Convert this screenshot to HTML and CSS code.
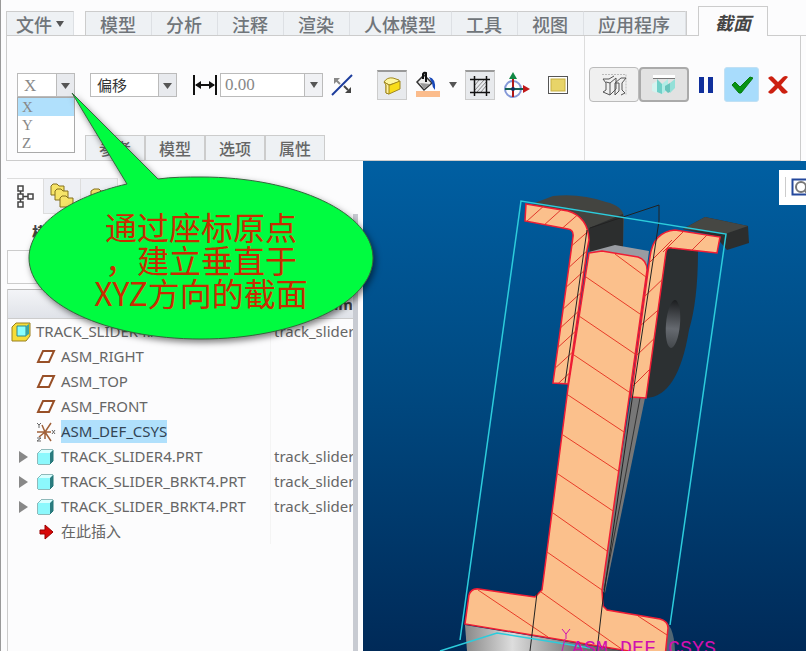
FILE: index.html
```html
<!DOCTYPE html>
<html lang="zh-CN">
<head>
    <meta charset="UTF-8">
    <meta name="viewport" content="width=device-width, initial-scale=1.0">
    <link rel="stylesheet" href="styles.css">
    <title>截面</title>
</head>
<body>
    <header class="ribbon">
        <nav class="tabs">
            <button class="tab tab-file">文件<span class="caret"></span></button>
            <div class="tab-group">
                <button class="tab">模型</button>
                <button class="tab">分析</button>
                <button class="tab">注释</button>
                <button class="tab">渲染</button>
                <button class="tab">人体模型</button>
                <button class="tab">工具</button>
                <button class="tab">视图</button>
                <button class="tab">应用程序</button>
            </div>
            <button class="tab tab-active">截面</button>
        </nav>
        <section class="ribbon-body">
            <div class="settings">
                <div class="toolbar">
                    <div class="group group-wide">
                        <div class="axis">
                            <select class="select select-axis" aria-label="方向">
                                <option>X</option>
                                <option>Y</option>
                                <option>Z</option>
                            </select>
                            <ul class="axis-list">
                                <li class="selected">X</li>
                                <li>Y</li>
                                <li>Z</li>
                            </ul>
                        </div>
                        <select class="select select-mode" aria-label="类型">
                            <option>偏移</option>
                        </select>
                    </div>
                    <div class="group group-offset">
                        <svg width="24" height="22" viewBox="0 0 24 22">
                            <path d="M1 1v20M23 1v20M3 11h18" stroke="#111" stroke-width="2" fill="none"/>
                            <path d="M2 11l6-4v8zM22 11l-6-4v8z" fill="#111"/>
                        </svg>
                        <div class="combo">
                            <input type="text" value="0.00" aria-label="距离">
                            <button aria-label="最近的值"><span class="caret"></span></button>
                        </div>
                    </div>
                    <button class="tool" aria-label="反向">
                        <svg width="22" height="24" viewBox="0 0 22 24">
                            <path d="M1 22L21 2" stroke="#1c3c9c" stroke-width="2"/>
                            <path d="M9 11L5 7" stroke="#888" stroke-width="2"/>
                            <path d="M3 5h6l-6 6z" fill="#888"/>
                            <path d="M13 13l4 4" stroke="#444" stroke-width="2"/>
                            <path d="M20 14v6h-6z" fill="#444"/>
                        </svg>
                    </button>
                    <div class="group group-view">
                        <button class="tool tool-on" aria-label="封闭">
                            <svg width="20" height="20" viewBox="0 0 20 20">
                                <path d="M2 6q3-5 9-4l6 2v2l-10 3z" fill="#fdf6a0" stroke="#a08820"/>
                                <path d="M4 8l4 1 10-4v8L7 18l-3-1z" fill="#f8dc18" stroke="#a08820"/>
                                <path d="M2 6l5 3v9l-3-1V9z" fill="#fff0a0" stroke="#a08820"/>
                            </svg>
                        </button>
                        <button class="tool" aria-label="颜色">
                            <svg width="26" height="28" viewBox="0 0 26 28">
                                <rect x="1" y="20" width="24" height="6" fill="#fbbc8c"/>
                                <path d="M2 11l7-7 8 8-8 7z" fill="#eee" stroke="#333" stroke-width="1.5"/>
                                <path d="M5 12l10 1-6 5z" fill="#999"/>
                                <path d="M8 8V3q1-2 3-1v9" fill="none" stroke="#111" stroke-width="2"/>
                                <path d="M14 6q7 1 6 13q-3-3-3-7z" fill="#1848b8"/>
                            </svg>
                        </button>
                        <button class="tool" aria-label="更多颜色"><span class="caret"></span></button>
                        <button class="tool tool-on" aria-label="剖面线">
                            <svg width="22" height="22" viewBox="0 0 22 22">
                                <path d="M6 10l4-5M6 15l9-10M8 17l9-10M12 17l5-6" stroke="#888"/>
                                <path d="M5.500 1v20M17.500 1v20M1 4.500h20M1 17.500h20" stroke="#111" stroke-width="1.500"/>
                            </svg>
                        </button>
                        <button class="tool" aria-label="拖动器">
                            <svg width="28" height="28" viewBox="0 0 28 28">
                                <circle cx="10" cy="18" r="8" fill="none" stroke="#8498d8" stroke-width="2"/>
                                <path d="M10 6v20" stroke="#b01818" stroke-width="2"/>
                                <path d="M2 18h20" stroke="#126050" stroke-width="2"/>
                                <path d="M10 1l4 7H6z" fill="#118844"/>
                                <path d="M27 18l-7-4v8z" fill="#c01818"/>
                                <circle cx="10" cy="18" r="2" fill="#113366"/>
                            </svg>
                        </button>
                    </div>
                    <button class="tool" aria-label="2D 视图">
                        <svg width="22" height="20" viewBox="0 0 22 20">
                            <rect x="1.500" y="1.500" width="19" height="17" fill="#fff" stroke="#555"/>
                            <rect x="4" y="4" width="14" height="12" fill="#e8d468" stroke="#c8b040"/>
                        </svg>
                    </button>
                </div>
                <nav class="panels">
                    <button>参考</button>
                    <button>模型</button>
                    <button>选项</button>
                    <button>属性</button>
                </nav>
            </div>
            <div class="actions">
                <button class="preview" aria-label="无预览">
                    <svg width="26" height="26" viewBox="0 0 26 26" fill="none" stroke="#555">
                        <path d="M1 2.500h24v21" stroke="#bbb" stroke-dasharray="2 1"/>
                        <path d="M2 7h6L13 4M2 7l3 4v7l-3 2 7 3V11L5 10M9 11l6-5v11l-6 6M14 23V11l6-5h5l-4 5v7l3 3-4 2M14 11h4v8l-4 4"/>
                    </svg>
                </button>
                <button class="preview preview-on" aria-label="预览">
                    <svg width="26" height="26" viewBox="0 0 26 26">
                        <path d="M2 3h22v4H2z" fill="#fff"/>
                        <path d="M2 6.500h22" stroke="#777"/>
                        <path d="M1 12l5-3v12l-5-2z" fill="#d4f4f0"/>
                        <path d="M6 7l5 5v10l-5-2z" fill="#70d0c8"/>
                        <path d="M11 12l6-5v10l-6 5z" fill="#b0ece6"/>
                        <path d="M14 14l5-3v9l-2 1-3-3z" fill="#68c4bc"/>
                        <path d="M19 11l5-4v9l-5 5z" fill="#94e0d8"/>
                    </svg>
                </button>
                <button class="tool tool-pause" aria-label="暂停">
                    <svg width="16" height="18" viewBox="0 0 16 18"><path d="M1 1h5v16H1zM10 1h5v16h-5z" fill="#10309c"/></svg>
                </button>
                <button class="tool tool-ok" aria-label="确定">
                    <svg width="22" height="18" viewBox="0 0 22 18"><path d="M1 9l3-3 5 5L19 1l3 1L10 17H8z" fill="#069414" stroke="#077a10"/></svg>
                </button>
                <button class="tool" aria-label="取消">
                    <svg width="22" height="20" viewBox="0 0 22 20"><path d="M1 3q3-3 5-1l5 5 5-5q3-2 5 0l-7 8 7 7q-3 3-6 1l-4-5-5 5q-3 2-5-1l7-7z" fill="#cc2010"/></svg>
                </button>
            </div>
        </section>
    </header>

    <main class="workspace">
        <aside class="navigator">
            <nav class="nav-tabs">
                <button class="nav-tab nav-tab-on" aria-label="模型树">
                    <svg width="18" height="26" viewBox="0 0 18 26" fill="none" stroke="#444" stroke-width="1.500">
                        <path d="M2 2h5v5H2zM2 10h5v5H2zM2 18h5v5H2zM12 10h5v5h-5zM4.500 7v3M4.500 15v3M7 12.500h5"/>
                    </svg>
                </button>
                <button class="nav-tab" aria-label="文件夹浏览器">
                    <svg width="24" height="26" viewBox="0 0 24 26" fill="#f6e468" stroke="#85701c">
                        <path d="M1 12V3l2-2h4l2 2h5v9z"/>
                        <path d="M5 17V8l2-2h4l2 2h5v9z"/>
                        <path d="M10 24v-9l2-2h4l2 2h5v9z"/>
                    </svg>
                </button>
                <button class="nav-tab" aria-label="收藏夹">
                    <svg width="24" height="26" viewBox="0 0 24 26" fill="#f6e468" stroke="#85701c">
                        <path d="M4 16V8l3-2h5l2 2h6v8z"/>
                    </svg>
                </button>
            </nav>
            <h2 class="nav-title">模型树</h2>
            <div class="nav-filter"></div>
            <div class="tree-box">
                <table class="tree">
                    <thead>
                        <tr><th></th><th class="col-name">Comm</th></tr>
                    </thead>
                    <tbody>
                        <tr>
                            <td><div class="node node-root"><svg width="20" height="20" viewBox="0 0 20 20"><path d="M1 5l4-4h14v13l-4 5H1z" fill="#f6dc38" stroke="#998020"/><path d="M6 4h9v10H6z" fill="#8ff" stroke="#388"/><path d="M15 4l3-2v10l-3 2z" fill="#39a5a5"/></svg><span>TRACK_SLIDER4.ASM</span></div></td>
                            <td>track_slider</td>
                        </tr>
                        <tr>
                            <td><div class="node"><svg width="20" height="16" viewBox="0 0 20 16"><path d="M7 2h11l-5 11H2z" fill="#fff" stroke="#985028" stroke-width="2"/></svg><span>ASM_RIGHT</span></div></td>
                            <td></td>
                        </tr>
                        <tr>
                            <td><div class="node"><svg width="20" height="16" viewBox="0 0 20 16"><path d="M7 2h11l-5 11H2z" fill="#fff" stroke="#985028" stroke-width="2"/></svg><span>ASM_TOP</span></div></td>
                            <td></td>
                        </tr>
                        <tr>
                            <td><div class="node"><svg width="20" height="16" viewBox="0 0 20 16"><path d="M7 2h11l-5 11H2z" fill="#fff" stroke="#985028" stroke-width="2"/></svg><span>ASM_FRONT</span></div></td>
                            <td></td>
                        </tr>
                        <tr>
                            <td><div class="node"><svg width="20" height="20" viewBox="0 0 20 20" fill="none" stroke="#a06038" stroke-width="1.500"><path d="M1 10h14M9 10l6-9M9 10l-3-7M9 10l-6 5M9 10l6 9M9 10v7"/><path d="M1 1l2 2 2-2M3 3v3M16 8l3 4M19 8l-3 4M1 16h4l-4 3h4" stroke="#666" stroke-width="1"/></svg><span class="picked">ASM_DEF_CSYS</span></div></td>
                            <td></td>
                        </tr>
                        <tr>
                            <td><div class="node node-part"><i class="expand"></i><svg width="20" height="18" viewBox="0 0 20 18"><path d="M2 5l3-3h12v11l-3 3H2z" fill="#2b7c80" stroke="#277"/><path d="M2 5l3-3h12l-3 3z" fill="#d8ffff"/><path d="M2 5h12v11H2z" fill="#8cf8fc"/></svg><span>TRACK_SLIDER4.PRT</span></div></td>
                            <td>track_slider</td>
                        </tr>
                        <tr>
                            <td><div class="node node-part"><i class="expand"></i><svg width="20" height="18" viewBox="0 0 20 18"><path d="M2 5l3-3h12v11l-3 3H2z" fill="#2b7c80" stroke="#277"/><path d="M2 5l3-3h12l-3 3z" fill="#d8ffff"/><path d="M2 5h12v11H2z" fill="#8cf8fc"/></svg><span>TRACK_SLIDER_BRKT4.PRT</span></div></td>
                            <td>track_slider</td>
                        </tr>
                        <tr>
                            <td><div class="node node-part"><i class="expand"></i><svg width="20" height="18" viewBox="0 0 20 18"><path d="M2 5l3-3h12v11l-3 3H2z" fill="#2b7c80" stroke="#277"/><path d="M2 5l3-3h12l-3 3z" fill="#d8ffff"/><path d="M2 5h12v11H2z" fill="#8cf8fc"/></svg><span>TRACK_SLIDER_BRKT4.PRT</span></div></td>
                            <td>track_slider</td>
                        </tr>
                        <tr>
                            <td><div class="node"><svg width="20" height="16" viewBox="0 0 20 16"><path d="M4 6h5V1l8 7-8 7v-5H4z" fill="#d80808" stroke="#900"/></svg><span>在此插入</span></div></td>
                            <td></td>
                        </tr>
                    </tbody>
                </table>
            </div>
        </aside>

        <section class="graphics">
            <svg class="model" viewBox="363 161 443 490" preserveAspectRatio="xMinYMin slice">
                <defs>
                    <linearGradient id="hole" x1="0" y1="0" x2="0" y2="1">
                        <stop offset="0" stop-color="#1c1e20"/>
                        <stop offset=".6" stop-color="#666a70"/>
                        <stop offset="1" stop-color="#44484c"/>
                    </linearGradient>
                    <linearGradient id="bore" x1="0" y1="0" x2="1" y2="0">
                        <stop offset="0" stop-color="#888"/>
                        <stop offset=".3" stop-color="#ddd"/>
                        <stop offset=".7" stop-color="#777"/>
                        <stop offset="1" stop-color="#555"/>
                    </linearGradient>
                    <clipPath id="left"><path d="M526 204L568 211Q588 217 589 240L587 250L568 384L553 383L573 237Q574 230 568 229L525 221z"/></clipPath>
                    <clipPath id="right"><path d="M631 397L650 257Q653 232 675 230L720 237L717 253L672 248Q667 247 666 252L646 398z"/></clipPath>
                </defs>

                <!-- bodies behind the section -->
                <path d="M532 204L553 196Q580 193 606 202Q623 206 624 217L623 247L590 253L580 220z" fill="#434440"/>
                <path d="M589 228L623 214V247L590 252z" fill="#2c2e2e"/>
                <path d="M683 229L705 217L748 226L749 243L727 250L715 236z" fill="#2c2e2e"/>
                <path d="M683 229L705 217L748 226L725 234z" fill="#464743"/>
                <path d="M666 247L698 251Q698 300 689 330Q678 397 646 398z" fill="#2c3032"/>
                <ellipse cx="673" cy="324" rx="7" ry="24" fill="url(#hole)" transform="rotate(5 673 324)"/>
                <path d="M589 252L615 245L649 251L647 266L602 254z" fill="#999ca2"/>
                <path d="M631 397L645 398L605 593L600 590z" fill="#777"/>
                <path d="M640 398L604 590" stroke="#333"/>
                <path d="M465 625L623 651H467z" fill="url(#bore)"/>
                <path d="M660 619Q674 622 675 651H662z" fill="#526674"/>

                <!-- slider -->
                <path d="M589 253L602 251L638 257Q647 260 647 270L602 590L603 606L607 610L660 619Q668 621 668 628L665 657L465 624L469 595Q471 588 479 589L535 597L542 590L568 388z" fill="#fbc08c" stroke="#f01c34" stroke-width="1.500"/>
                <path d="M615 254L646 277M586 277L640 314M579 316L635 354M574 355L629 392M568 395L624 432M563 435L618 471M558 474L613 511M553 513L607 551M547 552L602 590M541 592L630 655M478 590L548 637M638 616L667 635" stroke="#e83c28" fill="none"/>

                <!-- brackets -->
                <path d="M526 204L568 211Q588 217 589 240L587 250L568 384L553 383L573 237Q574 230 568 229L525 221z" fill="#fbc08c" stroke="#f01c34" stroke-width="1.500"/>
                <path clip-path="url(#left)" d="M526 222L546 204M543 226L563 208M558 232L582 211M568 249L592 228M565 271L589 249M562 291L586 269M560 312L584 290M557 331L581 309M554 351L578 329M552 371L576 349M550 391L574 369" stroke="#e0382c"/>
                <path d="M631 397L650 257Q653 232 675 230L720 237L717 253L672 248Q667 247 666 252L646 398z" fill="#fbc08c" stroke="#f01c34" stroke-width="1.500"/>
                <path clip-path="url(#right)" d="M690 252L710 232M663 252L687 228M647 265L672 240M643 298L668 274M640 326L665 304M636 356L661 332M631 388L655 364" stroke="#e0382c"/>

                <!-- datum planes and bounding box -->
                <path d="M587 230L565 383M537 593L530 651M590 228L659 205V221L632 400L602 607L597 651" stroke="#222" fill="none"/>
                <path d="M460 640L521 201L726 234L670 625M440 651L497 633L590 648" stroke="#2cccdc" stroke-width="1.500" fill="none"/>
                <path d="M562 629l4 5 4-5M566 634v5M565 639l-3 12" stroke="#d010b0" fill="none"/>
                <text class="csys" x="572" y="654">ASM_DEF_CSYS</text>
            </svg>
            <div class="view-bar">
                <button aria-label="重新调整">
                    <svg width="20" height="20" viewBox="0 0 20 20" fill="none">
                        <path d="M1.500 2.500h22v15h-22z" stroke="#24489c" stroke-width="2"/>
                        <circle cx="10" cy="10" r="5" stroke="#777" stroke-width="2"/>
                        <path d="M14 14l5 5" stroke="#777" stroke-width="2"/>
                    </svg>
                </button>
            </div>
        </section>
    </main>

    <div class="callout">
        <svg width="350" height="260" viewBox="26 90 350 260">
            <path d="M72 93L158 179C172 177 187 177 201 177C296 177 373 213 373 258S296 339 201 339S29 303 29 258C29 225 70 197 127 184z" fill="#00fc40" stroke="#35663c"/>
        </svg>
        <p>通过座标原点<br>，建立垂直于<br>XYZ方向的截面</p>
    </div>
</body>
</html>
```
FILE: styles.css
```css
html{
    box-sizing: border-box;
    font-family: "Noto Sans", "Noto Sans CJK SC", sans-serif;
    font-size: 15px;
    color: #666;
}
*,
*:before,
*:after{
    box-sizing: inherit;
}
body{
    margin: 0;
    height: 100vh;
    display: flex;
    flex-direction: column;
    overflow: hidden;
    background-color: #fcfcfd;
    border-left: 1px solid #999;
}
button,
input,
select{
    font: inherit;
    color: inherit;
    margin: 0;
    padding: 0;
    border: 0;
    background: none;
}
svg{
    display: block;
}
.caret{
    display: inline-block;
    border: 4px solid transparent;
    border-top: 6px solid #555;
    border-bottom: 0;
}

/* ribbon */
.ribbon{
    padding: 6px 0 0 5px;
}
.tabs{
    display: flex;
    align-items: flex-end;
    gap: 11px;
    border-bottom: 1px solid #ccc;
}
.tab{
    height: 24px;
    padding: 0 15px 0 14px;
    font: 500 18px/22px "Noto Sans CJK SC", sans-serif;
    color: #70757a;
    white-space: nowrap;
    background-color: #eef1f4;
    border-top: 1px solid #ccc;
    border-right: 1px solid #dde0e4;
}
.tab-group{
    display: flex;
    border-left: 1px solid #ccc;
    border-right: 1px solid #ccc;
}
.tab-file{
    display: flex;
    align-items: center;
    gap: 4px;
    padding: 0 9px;
    border-left: 1px solid #ccc;
}
.tab-active{
    height: 30px;
    padding: 0 16px;
    margin-bottom: -1px;
    font-weight: 700;
    font-style: italic;
    color: #444;
    background-color: #fcfcfd;
    border: 1px solid #ccc;
    border-bottom: 0;
}
.ribbon-body{
    display: flex;
    height: 125px;
    margin-right: 5px;
    border: 1px solid #ccc;
    border-top: 0;
}
.settings{
    flex: 1;
    display: flex;
    flex-direction: column;
    justify-content: space-between;
    padding-top: 31px;
}
.toolbar,
.group,
.actions{
    display: flex;
    align-items: center;
}
.toolbar{
    height: 36px;
    padding-left: 10px;
}
.group-wide{
    gap: 15px;
    margin-right: 16px;
}
.group-offset{
    gap: 3px;
    margin-right: 8px;
}
.group-view{
    gap: 8px;
    margin: 0 16px 0 24px;
}
.select{
    height: 24px;
    padding-left: 6px;
    appearance: none;
    border: 1px solid #bbb;
    background: #fff url("data:image/svg+xml,%3Csvg xmlns='http://www.w3.org/2000/svg' width='18' height='22'%3E%3Cpath d='M0 0h18v22H0z' fill='%23e8eaee'/%3E%3Cpath d='M.5 0v22' stroke='%23bbb'/%3E%3Cpath d='M5 9h9l-4.5 6z' fill='%23555'/%3E%3C/svg%3E") no-repeat right;
}
.select-axis,
.axis-list,
.combo input{
    font-family: "Liberation Serif", serif;
    font-size: 17px;
    color: #888;
}
.axis{
    position: relative;
    width: 58px;
}
.select-axis{
    display: block;
    width: 58px;
}
.select-mode{
    width: 87px;
    color: #333;
}
.axis-list{
    position: absolute;
    z-index: 2;
    top: 24px;
    left: 0;
    width: 58px;
    margin: 0;
    padding: 0;
    list-style: none;
    font-size: 15px;
    line-height: 18px;
    background-color: #fff;
    border: 1px solid #aaa;
}
.axis-list li{
    padding-left: 4px;
}
.axis-list .selected{
    background-color: #b0e0fc;
}
.combo{
    display: flex;
    width: 103px;
    height: 24px;
    border: 1px solid #bbb;
    background-color: #fff;
}
.combo input{
    flex: 1;
    min-width: 0;
    padding-left: 4px;
}
.combo button{
    display: flex;
    align-items: center;
    justify-content: center;
    width: 18px;
    background-color: #f0f1f4;
    border-left: 1px solid #bbb;
}
.tool{
    display: flex;
    align-items: center;
    justify-content: center;
}
.tool-on{
    width: 30px;
    height: 30px;
    background-color: #e8eaed;
    border: 1px solid #ccc;
    border-top: 2px solid #999;
}
.panels{
    display: flex;
    margin-left: 78px;
}
.panels button{
    width: 60px;
    height: 25px;
    font: 500 16px/23px "Noto Sans CJK SC", sans-serif;
    background-color: #eef1f4;
    border: 1px solid #ccc;
    border-bottom: 0;
}
.actions{
    align-items: flex-start;
    padding: 31px 11px 0 4px;
    border-left: 1px solid #ddd;
}
.actions .tool{
    height: 35px;
}
.preview{
    display: flex;
    align-items: center;
    justify-content: center;
    width: 50px;
    height: 35px;
    background-color: #f0f0f0;
    border: 1px solid #bbb;
    border-radius: 4px;
}
.preview-on{
    background-color: #e2e2e2;
    border: 2px solid #aaa;
}
.actions .tool-pause{
    margin: 0 10px 0 9px;
}
.actions .tool-ok{
    width: 35px;
    margin-right: 8px;
    background-color: #a8dcfc;
    border: 1px solid #c0e0f4;
    border-radius: 3px;
}

/* model tree */
.workspace{
    flex: 1;
    display: flex;
    min-height: 0;
}
.navigator{
    flex: none;
    display: flex;
    flex-direction: column;
    width: 362px;
    padding: 17px 4px 0 6px;
    border-right: 1px solid #fff;
}
.nav-tabs{
    display: flex;
    flex: none;
}
.nav-tab{
    display: flex;
    align-items: center;
    justify-content: center;
    width: 37px;
    height: 36px;
    background-color: #eef0f4;
    border: 1px solid #ddd;
    border-left: 0;
}
.nav-tab-on{
    background-color: #fcfcfd;
    border-bottom: 0;
}
.nav-title{
    flex: none;
    height: 36px;
    margin: 0;
    padding-left: 25px;
    font: 700 16px/36px "Noto Sans CJK SC", sans-serif;
    color: #444;
    border-right: 5px solid #c8cbd2;
}
.nav-filter{
    flex: none;
    height: 34px;
    margin-bottom: 5px;
    border: 1px solid #ccc;
    border-right: 5px solid #c8cbd2;
}
.tree-box{
    flex: 1;
    min-height: 0;
    overflow: hidden;
    border-left: 1px solid #ccc;
    border-right: 5px solid #c8cbd2;
}
.tree{
    width: 100%;
    table-layout: fixed;
    border-collapse: separate;
    border-spacing: 0;
}
.tree thead tr{
    height: 30px;
    background: linear-gradient(#f4f5f8, #dfe2e8);
}
.tree th{
    padding: 0;
    border-top: 1px solid #bbb;
    border-bottom: 1px solid #ccc;
}
.tree .col-name{
    width: 83px;
    text-align: right;
    color: #444;
}
.tree td{
    height: 25px;
    padding: 0;
    line-height: 25px;
    white-space: nowrap;
    overflow: hidden;
}
.tree td + td{
    padding-left: 3px;
    border-left: 1px solid #f4f4f4;
}
.node{
    display: flex;
    align-items: center;
    gap: 5px;
    height: 25px;
    padding-left: 28px;
}
.node-root{
    padding-left: 3px;
}
.node-part{
    padding-left: 11px;
}
.node span{
    line-height: 23px;
}
.node .picked{
    color: #345;
    background-color: #b0e0fc;
}
.expand{
    width: 12px;
    border: 6px solid transparent;
    border-left: 9px solid #888;
    border-right: 0;
}

/* graphics window */
.graphics{
    position: relative;
    flex: 1;
    min-width: 0;
    background: linear-gradient(#005fa2, #004a82 45%, #002a58);
}
.model{
    width: 100%;
    height: 100%;
}
.csys{
    font-family: "Liberation Mono", monospace;
    font-size: 20px;
    fill: #d010b0;
}
.view-bar{
    position: absolute;
    top: 9px;
    right: 0;
    width: 27px;
    height: 35px;
    padding: 7px 0 0 6px;
    overflow: hidden;
    background-color: #fff;
}
.view-bar button{
    padding-left: 5px;
    border-left: 1px solid #ccc;
}

/* note */
.callout{
    position: absolute;
    z-index: 3;
    top: 90px;
    left: 26px;
    width: 350px;
}
.callout svg{
    filter: drop-shadow(2px 3px 3px rgba(0, 0, 0, .5));
}
.callout p{
    position: absolute;
    top: 120px;
    left: 0;
    width: 100%;
    margin: 0;
    text-align: center;
    font-family: "Noto Sans CJK SC", sans-serif;
    font-size: 32px;
    line-height: 33px;
    color: #c82c00;
}
```
